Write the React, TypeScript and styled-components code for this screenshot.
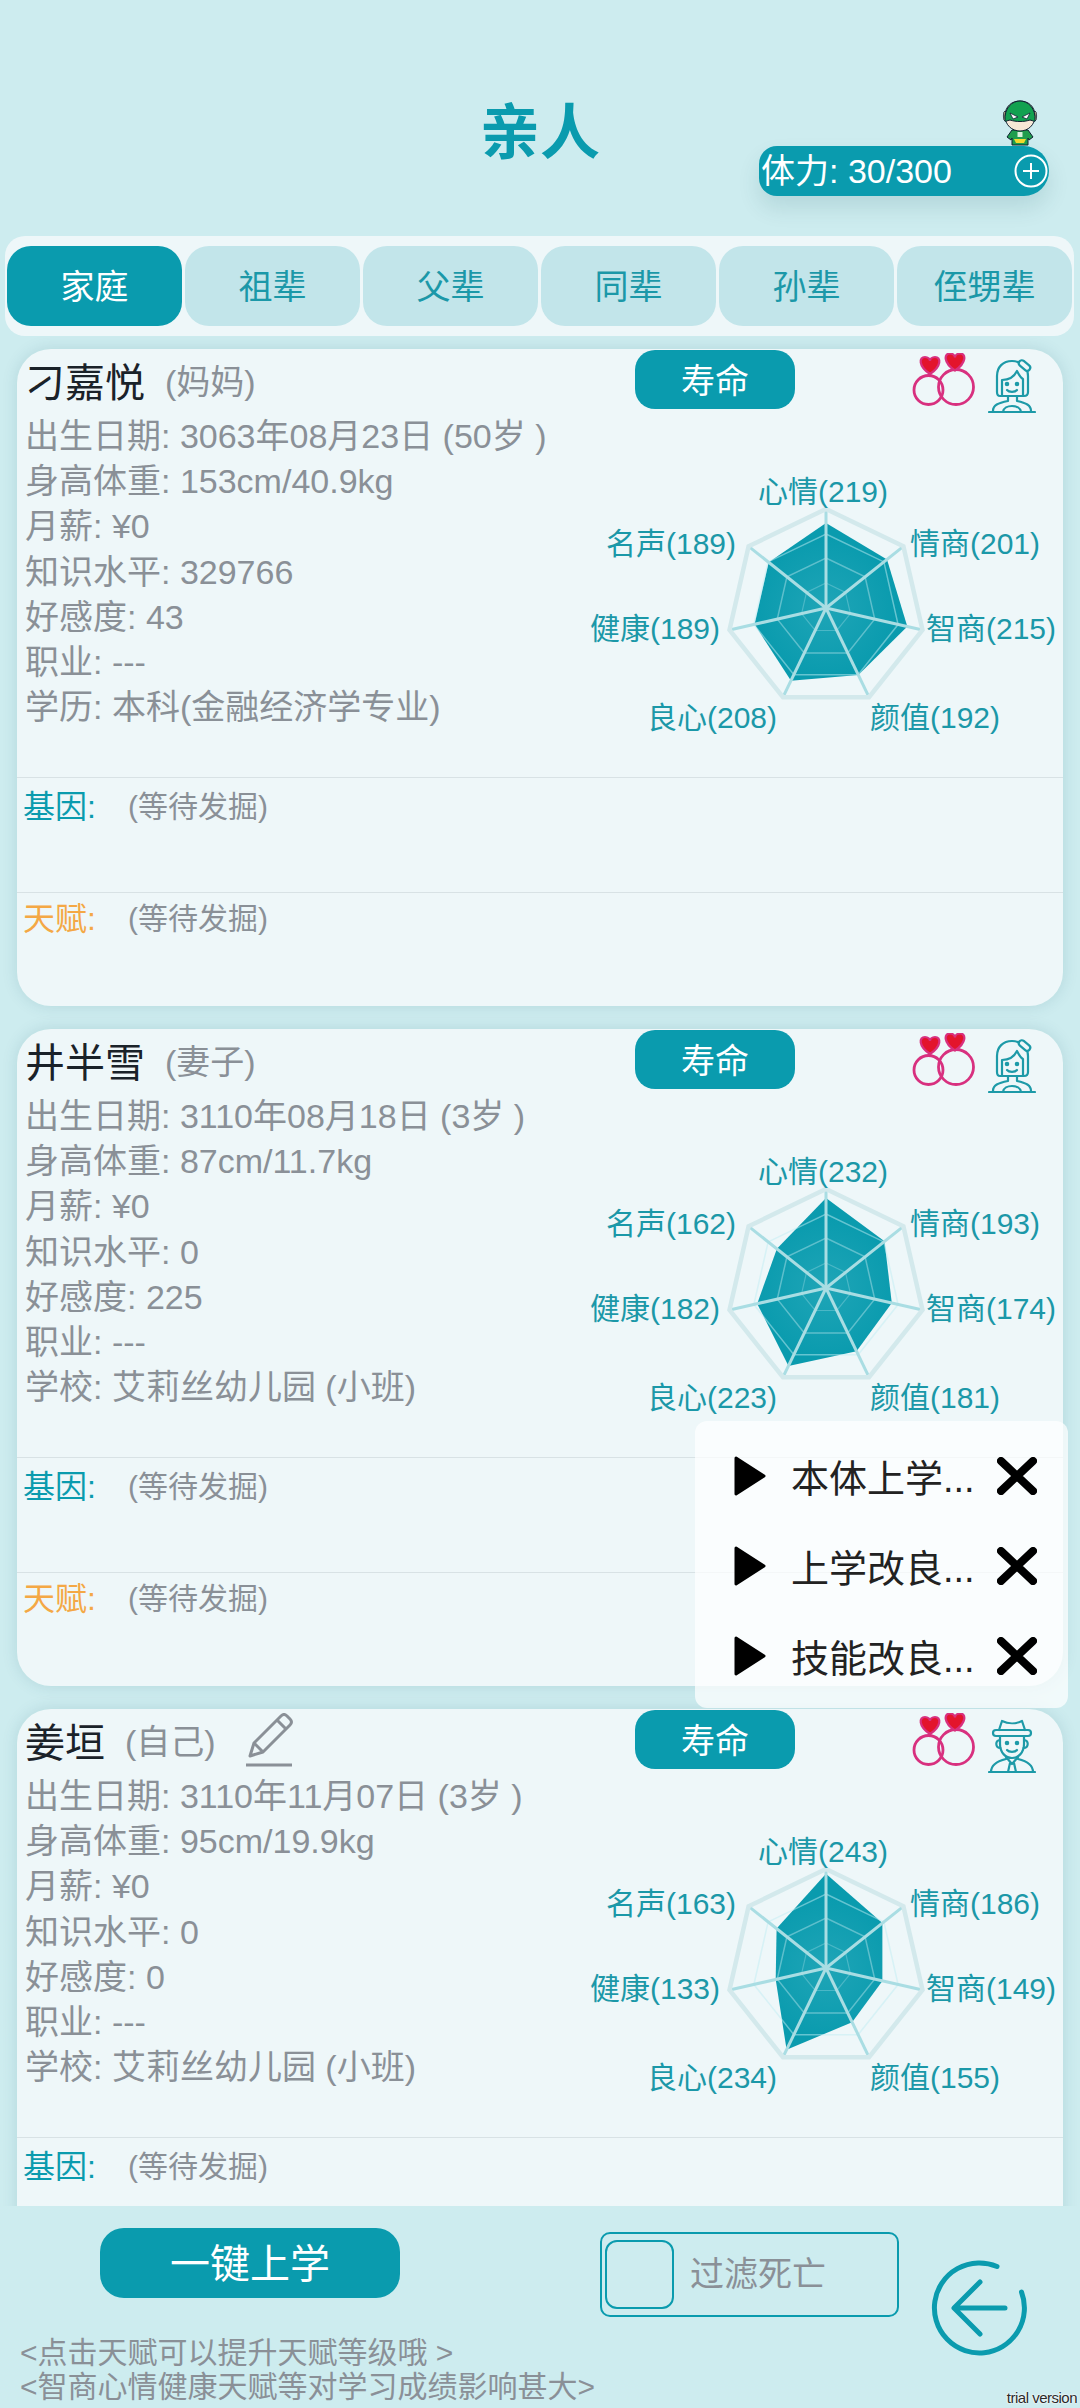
import styled, { createGlobalStyle } from 'styled-components';

const TEAL = '#0a9bae';
const LABEL_TEAL = '#1b98a8';
const GRAY = '#8a9097';
const PINK = '#d8307f';

const AXES = ['心情', '情商', '智商', '颜值', '良心', '健康', '名声'];
const LABEL_POS = [
  [243, 42],
  [395, 94],
  [411, 179],
  [355, 268],
  [132, 268],
  [75, 179],
  [91, 94],
];
const CX = 246;
const CY = 148;

type Who = 'mom' | 'wife' | 'me';

type Person = {
  name: string;
  relation: string;
  editable?: boolean;
  // last card runs under the footer, its talent row is never on screen
  hideTalent?: boolean;
  icon: Who;
  lines: string[];
  stats: number[];
};

const people: Person[] = [
  {
    name: '刁嘉悦',
    relation: '(妈妈)',
    icon: 'mom',
    lines: [
      '出生日期: 3063年08月23日 (50岁 )',
      '身高体重: 153cm/40.9kg',
      '月薪: ¥0',
      '知识水平: 329766',
      '好感度: 43',
      '职业: ---',
      '学历: 本科(金融经济学专业)',
    ],
    stats: [219, 201, 215, 192, 208, 189, 189],
  },
  {
    name: '井半雪',
    relation: '(妻子)',
    icon: 'wife',
    lines: [
      '出生日期: 3110年08月18日 (3岁 )',
      '身高体重: 87cm/11.7kg',
      '月薪: ¥0',
      '知识水平: 0',
      '好感度: 225',
      '职业: ---',
      '学校: 艾莉丝幼儿园 (小班)',
    ],
    stats: [232, 193, 174, 181, 223, 182, 162],
  },
  {
    name: '姜垣',
    relation: '(自己)',
    editable: true,
    hideTalent: true,
    icon: 'me',
    lines: [
      '出生日期: 3110年11月07日 (3岁 )',
      '身高体重: 95cm/19.9kg',
      '月薪: ¥0',
      '知识水平: 0',
      '好感度: 0',
      '职业: ---',
      '学校: 艾莉丝幼儿园 (小班)',
    ],
    stats: [243, 186, 149, 155, 234, 133, 163],
  },
];

const tabs = ['家庭', '祖辈', '父辈', '同辈', '孙辈', '侄甥辈'];
const tasks = ['本体上学...', '上学改良...', '技能改良...'];

function polygon(radii: number[]) {
  return radii
    .map((r, i) => {
      const a = (-90 + (i * 360) / 7) * (Math.PI / 180);
      return `${(CX + r * Math.cos(a)).toFixed(1)},${(CY + r * Math.sin(a)).toFixed(1)}`;
    })
    .join(' ');
}

function Radar({ stats, id }: { stats: number[]; id: string }) {
  const spokes = polygon(Array(7).fill(99)).split(' ');
  return (
    <RadarSvg viewBox="0 0 483 300">
      <defs>
        <radialGradient id={id} gradientUnits="userSpaceOnUse" cx={CX} cy={CY} r="70">
          <stop offset="0" stopColor="#1fa5b7" />
          <stop offset="1" stopColor="#0a9bae" />
        </radialGradient>
      </defs>
      <polygon points={polygon(stats.map((v) => v * 0.388))} fill={`url(#${id})`} />
      {[25, 50, 74].map((r, i) => (
        <polygon
          key={r}
          points={polygon(Array(7).fill(r))}
          fill="none"
          stroke={i === 2 ? '#bfeef3' : '#a9e0e7'}
          strokeOpacity={i === 0 ? 0.35 : 0.5}
          strokeWidth={i === 0 ? 1.2 : 1.5}
        />
      ))}
      {spokes.map((p) => {
        const [x, y] = p.split(',');
        return <line key={p} x1={CX} y1={CY} x2={x} y2={y} stroke="#a9dde3" strokeWidth="3" />;
      })}
      <polygon points={polygon(Array(7).fill(99))} fill="none" stroke="#d3e9ec" strokeWidth="4.5" />
      {AXES.map((a, i) => (
        <RadarLabel key={a} x={LABEL_POS[i][0]} y={LABEL_POS[i][1]} textAnchor="middle">
          {a}({stats[i]})
        </RadarLabel>
      ))}
    </RadarSvg>
  );
}

function Rings() {
  const heart = 'M0 8 C-12 0 -11 -9 -5 -9 C-2 -9 0 -7 0 -5 C0 -7 2 -9 5 -9 C11 -9 12 0 0 8 Z';
  return (
    <RingsSvg viewBox="0 0 64 54">
      <circle cx="16.5" cy="37" r="14.5" fill="none" stroke={PINK} strokeWidth="2.8" />
      <circle cx="44" cy="34" r="17.5" fill="none" stroke={PINK} strokeWidth="2.8" />
      <path d={heart} transform="translate(18 13)" fill="#e3142c" stroke={PINK} strokeWidth="2.2" />
      <path d={heart} transform="translate(43 9.5)" fill="#e3142c" stroke={PINK} strokeWidth="2.2" />
    </RingsSvg>
  );
}

function PersonIcon({ who }: { who: Who }) {
  if (who === 'me') {
    return (
      <PersonSvg viewBox="0 0 48 54">
        <path d="M11 11 L14 2 C20 5 28 5 34 2 L37 11" />
        <rect x="5" y="11" width="38" height="6" rx="3" />
        <path d="M12 17 V25 C12 34 18 39 24 39 C30 39 36 34 36 25 V17" />
        <path d="M12 21 C7 21 7 29 12.5 29 M36 21 C41 21 41 29 35.5 29" />
        <path d="M19 31 C21 33.5 27 33.5 29 31" />
        <path d="M18 38 L24 45 L30 38 M22 44 L20 53 M26 44 L28 53" />
        <path d="M3 53 C3 45 10 42 18 40 M45 53 C45 45 38 42 30 40 M1 53 H47" />
        <circle cx="19" cy="24" r="1.2" fill="#1d9aa8" />
        <circle cx="29" cy="24" r="1.2" fill="#1d9aa8" />
      </PersonSvg>
    );
  }
  return (
    <PersonSvg viewBox="0 0 48 54">
      <path d="M9 33 V17 C9 8 15 2 24 2 C32 2 40 8 40 17 V33 C40 36 38 37 36 37 H12 C10 37 9 36 9 33 Z" />
      <path d="M14 37 V21 C21 21 26 18 29 12 C31 16 33 19 35 20 V37" />
      <path d="M19 31 C21 33.5 27 33.5 29 31" />
      <path d="M20 37 V42 M29 37 V42 M5 52 C5 46 10 44 20 42 M43 52 C43 46 38 44 29 42" />
      <path d="M15 53 C16 45 32 45 33 53 M1 53 H47" />
      <rect x="30" y="3.5" width="13" height="6" rx="3" transform="rotate(40 36.5 6.5)" fill="#eef7f9" />
      <circle cx="19" cy="25" r="1.2" fill="#1d9aa8" />
      <circle cx="29" cy="25" r="1.2" fill="#1d9aa8" />
    </PersonSvg>
  );
}

function PersonCard({ person, index }: { person: Person; index: number }) {
  return (
    <Card>
      <TopRow>
        <NameBlock>
          <Name>{person.name}</Name>
          <Relation>{person.relation}</Relation>
          {person.editable && (
            <PencilSvg viewBox="0 0 48 54">
              <path d="M5 43 L9 30 L36 3 C38 1 40 1 42 3 L45 6 C47 8 47 10 45 12 L18 39 Z" />
              <path d="M9 30 L18 39 M32 7 L41 16" />
              <path d="M1 52 H47" />
            </PencilSvg>
          )}
        </NameBlock>
        <LifeButton>寿命</LifeButton>
        <IconGroup>
          <Rings />
          <PersonIcon who={person.icon} />
        </IconGroup>
      </TopRow>
      <Body>
        <InfoColumn>
          {person.lines.map((line) => (
            <InfoLine key={line}>{line}</InfoLine>
          ))}
        </InfoColumn>
        <Radar stats={person.stats} id={`radar-fill-${index}`} />
      </Body>
      <Section $top={11}>
        <SectionLabel $color={TEAL}>基因:</SectionLabel>
        <SectionNote>(等待发掘)</SectionNote>
      </Section>
      {!person.hideTalent && (
        <Section $top={8}>
          <SectionLabel $color="#f4a845">天赋:</SectionLabel>
          <SectionNote>(等待发掘)</SectionNote>
        </Section>
      )}
    </Card>
  );
}

export default function App() {
  return (
    <Page>
      <GlobalStyle />
      <Header>
        <Title>亲人</Title>
        <Stamina>
          <Hero viewBox="0 0 36 46">
            <path d="M10 30 H26 L31 37 L27 40 L26 38 V45 H10 V38 L9 40 L5 37 Z" fill="#1f9d4d" stroke="#123" strokeWidth="1" />
            <path d="M12 39 H24 L22 43 H14 Z" fill="#f2d92c" />
            <rect x="15.5" y="32" width="5" height="5" fill="#d7f2dc" />
            <ellipse cx="3" cy="16" rx="1.6" ry="5" fill="#e8c9a0" stroke="#123" strokeWidth=".8" />
            <ellipse cx="33" cy="16" rx="1.6" ry="5" fill="#e8c9a0" stroke="#123" strokeWidth=".8" />
            <path d="M3 16 C3 6 10 1 18 1 C26 1 33 6 33 16 C33 25 26 31 18 31 C10 31 3 25 3 16 Z" fill="#f6e8d6" stroke="#123" strokeWidth="1" />
            <path d="M3 21 C3 22 4 21 8 20 C14 22 22 22 28 20 C32 21 33 22 33 21 C34 8 26 1 18 1 C10 1 2 8 3 21 Z" fill="#12a150" stroke="#123" strokeWidth="1" />
            <path d="M8 13 L16 17 L11 19 Z M28 13 L20 17 L25 19 Z" fill="#fff" stroke="#123" strokeWidth=".8" />
          </Hero>
          <StaminaText>体力: 30/300</StaminaText>
          <PlusSvg viewBox="0 0 34 34">
            <circle cx="17" cy="17" r="15.5" fill="none" stroke="#fff" strokeWidth="2" />
            <path d="M17 9 V25 M9 17 H25" stroke="#fff" strokeWidth="2" />
          </PlusSvg>
        </Stamina>
      </Header>

      <TabBar>
        {tabs.map((tab, i) => (
          <Tab key={tab} $active={i === 0}>
            {tab}
          </Tab>
        ))}
      </TabBar>

      <CardList>
        {people.map((person, i) => (
          <PersonCard key={person.name} person={person} index={i} />
        ))}
      </CardList>

      <Footer>
        <FooterMain>
          <ActionRow>
            <SchoolButton>一键上学</SchoolButton>
            <FilterBox>
              <CheckBox />
              <FilterLabel>过滤死亡</FilterLabel>
            </FilterBox>
          </ActionRow>
          <Note>&lt;点击天赋可以提升天赋等级哦 &gt;</Note>
          <Note>&lt;智商心情健康天赋等对学习成绩影响甚大&gt;</Note>
        </FooterMain>
        <BackSvg viewBox="0 0 96 96">
          <path d="M66 6.5 A45 45 0 1 0 90.5 32" />
          <path d="M74 48 H24 M49 22 L23 48 L49 74" />
        </BackSvg>
      </Footer>

      <TaskPopup>
        {tasks.map((task) => (
          <TaskRow key={task}>
            <PlaySvg viewBox="0 0 32 40">
              <path d="M2 2 L30 20 L2 38 Z" />
            </PlaySvg>
            <TaskName>{task}</TaskName>
            <CloseSvg viewBox="0 0 40 38">
              <path d="M4 4 L36 34 M36 4 L4 34" />
            </CloseSvg>
          </TaskRow>
        ))}
      </TaskPopup>

      <Watermark>trial version</Watermark>
    </Page>
  );
}

const GlobalStyle = createGlobalStyle`
  html, body {
    margin: 0;
    padding: 0;
    background: #cdecef;
  }
  * {
    box-sizing: border-box;
  }
`;

const Page = styled.div`
  position: relative;
  width: 1080px;
  height: 2408px;
  overflow: hidden;
  display: flex;
  flex-direction: column;
  background: #cdecef;
  font-family: 'Liberation Sans', 'Noto Sans CJK SC', sans-serif;
`;

const Header = styled.div`
  position: relative;
  height: 236px;
  padding-top: 104px;
  flex-shrink: 0;
`;

const Title = styled.div`
  font-size: 60px;
  line-height: 60px;
  font-weight: bold;
  text-align: center;
  color: ${TEAL};
`;

const Stamina = styled.div`
  position: absolute;
  top: 146px;
  left: 759px;
  width: 290px;
  height: 50px;
  display: flex;
  align-items: center;
  justify-content: space-between;
  padding: 0 1px 0 2px;
  border-radius: 18px 25px 25px 18px;
  background: ${TEAL};
  box-shadow: 0 12px 22px rgba(0, 70, 80, 0.12);
`;

const Hero = styled.svg`
  position: absolute;
  top: -46px;
  right: 11px;
  width: 36px;
  height: 46px;
`;

const StaminaText = styled.span`
  padding-bottom: 5px;
  font-size: 34px;
  color: #fff;
`;

const PlusSvg = styled.svg`
  width: 34px;
  height: 34px;
`;

const TabBar = styled.div`
  margin: 0 6px 0 5px;
  height: 100px;
  padding: 10px 2px;
  display: flex;
  gap: 3px;
  flex-shrink: 0;
  border-radius: 20px;
  background: #eef7f9;
`;

const Tab = styled.div<{ $active: boolean }>`
  flex: 1;
  display: flex;
  align-items: center;
  justify-content: center;
  padding-bottom: 3px;
  border-radius: 24px;
  font-size: 34px;
  background: ${(p) => (p.$active ? TEAL : '#c2e5ea')};
  color: ${(p) => (p.$active ? '#fff' : LABEL_TEAL)};
`;

const CardList = styled.div`
  height: 1870px;
  flex-shrink: 0;
  padding: 13px 17px 0;
  display: flex;
  flex-direction: column;
  gap: 23px;
  overflow: hidden;
`;

const Card = styled.div`
  flex-shrink: 0;
  height: 657px;
  border-radius: 34px;
  background: #eef7f9;
  box-shadow: 0 0 16px rgba(0, 80, 100, 0.13);
`;

const TopRow = styled.div`
  height: 61px;
  display: grid;
  grid-template-columns: 618px 160px 1fr;
  align-items: center;
`;

const NameBlock = styled.div`
  display: flex;
  align-items: center;
  padding-left: 8px;
`;

const Name = styled.span`
  font-size: 40px;
  color: #1a2229;
`;

const Relation = styled.span`
  margin-left: 20px;
  font-size: 34px;
  color: ${GRAY};
`;

const PencilSvg = styled.svg`
  width: 48px;
  height: 54px;
  margin-left: 29px;
  fill: none;
  stroke: ${GRAY};
  stroke-width: 3;
  stroke-linejoin: round;
`;

const LifeButton = styled.div`
  height: 59px;
  display: flex;
  align-items: center;
  justify-content: center;
  padding-bottom: 3px;
  border-radius: 20px;
  font-size: 34px;
  color: #fff;
  background: ${TEAL};
`;

const IconGroup = styled.div`
  display: flex;
  align-items: flex-start;
  gap: 12px;
  margin-left: 117px;
  height: 61px;
  padding-top: 4px;
`;

const RingsSvg = styled.svg`
  width: 64px;
  height: 54px;
  flex-shrink: 0;
`;

const PersonSvg = styled.svg`
  width: 48px;
  height: 54px;
  margin-top: 6px;
  flex-shrink: 0;
  fill: none;
  stroke: #1d9aa8;
  stroke-width: 2.2;
  stroke-linecap: round;
  stroke-linejoin: round;
`;

const Body = styled.div`
  height: 367px;
  display: flex;
  justify-content: space-between;
`;

const InfoColumn = styled.div`
  padding: 4px 0 0 8px;
`;

const InfoLine = styled.div`
  font-size: 34px;
  line-height: 45.2px;
  white-space: nowrap;
  color: ${GRAY};
`;

const RadarSvg = styled.svg`
  width: 483px;
  height: 300px;
  margin-top: 50px;
  flex-shrink: 0;
`;

const RadarLabel = styled.text`
  font-size: 30px;
  fill: ${LABEL_TEAL};
`;

const Section = styled.div<{ $top: number }>`
  height: 114.5px;
  padding: ${(p) => p.$top}px 0 0 6px;
  display: flex;
  border-top: 1.5px solid #d8e2e5;
  font-size: 30px;
  line-height: 36px;
`;

const SectionLabel = styled.span<{ $color: string }>`
  width: 105px;
  font-size: 32px;
  color: ${(p) => p.$color};
`;

const SectionNote = styled.span`
  color: ${GRAY};
`;

const Footer = styled.div`
  flex: 1;
  display: flex;
`;

const FooterMain = styled.div`
  width: 931px;
  padding-left: 20px;
`;

const ActionRow = styled.div`
  height: 130px;
  padding: 22px 0 0 80px;
  display: flex;
  align-items: flex-start;
`;

const SchoolButton = styled.div`
  width: 300px;
  height: 70px;
  display: flex;
  align-items: center;
  justify-content: center;
  padding-bottom: 4px;
  border-radius: 24px;
  font-size: 40px;
  color: #fff;
  background: ${TEAL};
`;

const FilterBox = styled.div`
  width: 299px;
  height: 85px;
  margin: 4px 0 0 200px;
  padding: 6px 0 0 3px;
  display: flex;
  align-items: flex-start;
  border: 2px solid ${TEAL};
  border-radius: 10px;
`;

const CheckBox = styled.div`
  width: 69px;
  height: 69px;
  border: 2.5px solid ${TEAL};
  border-radius: 12px;
`;

const FilterLabel = styled.span`
  margin: 2px 0 0 16px;
  font-size: 34px;
  line-height: 64px;
  color: ${GRAY};
`;

const Note = styled.div`
  font-size: 30px;
  line-height: 34px;
  white-space: nowrap;
  color: ${GRAY};
`;

const BackSvg = styled.svg`
  width: 96px;
  height: 96px;
  margin-top: 54px;
  overflow: visible;
  fill: none;
  stroke: ${TEAL};
  stroke-width: 5;
  stroke-linecap: round;
  stroke-linejoin: round;
`;

const TaskPopup = styled.div`
  position: absolute;
  top: 1421px;
  left: 695px;
  width: 373px;
  height: 287px;
  padding-top: 10px;
  border-radius: 12px;
  background: rgba(255, 255, 255, 0.72);
`;

const TaskRow = styled.div`
  height: 90px;
  padding-left: 39px;
  display: flex;
  align-items: center;
`;

const PlaySvg = styled.svg`
  width: 32px;
  height: 40px;
  fill: #000;
  stroke: #000;
  stroke-width: 3;
  stroke-linejoin: round;
`;

const TaskName = styled.span`
  width: 206px;
  margin-left: 25px;
  padding-bottom: 2px;
  font-size: 38px;
  white-space: nowrap;
  color: #222;
`;

const CloseSvg = styled.svg`
  width: 40px;
  height: 38px;
  fill: none;
  stroke: #000;
  stroke-width: 8;
  stroke-linecap: round;
`;

const Watermark = styled.div`
  position: absolute;
  right: 3px;
  bottom: 2px;
  font-size: 15px;
  line-height: 16px;
  letter-spacing: -0.5px;
  color: #2a2a2a;
  text-shadow: 0 0 2px #fff, 0 0 2px #fff;
`;
